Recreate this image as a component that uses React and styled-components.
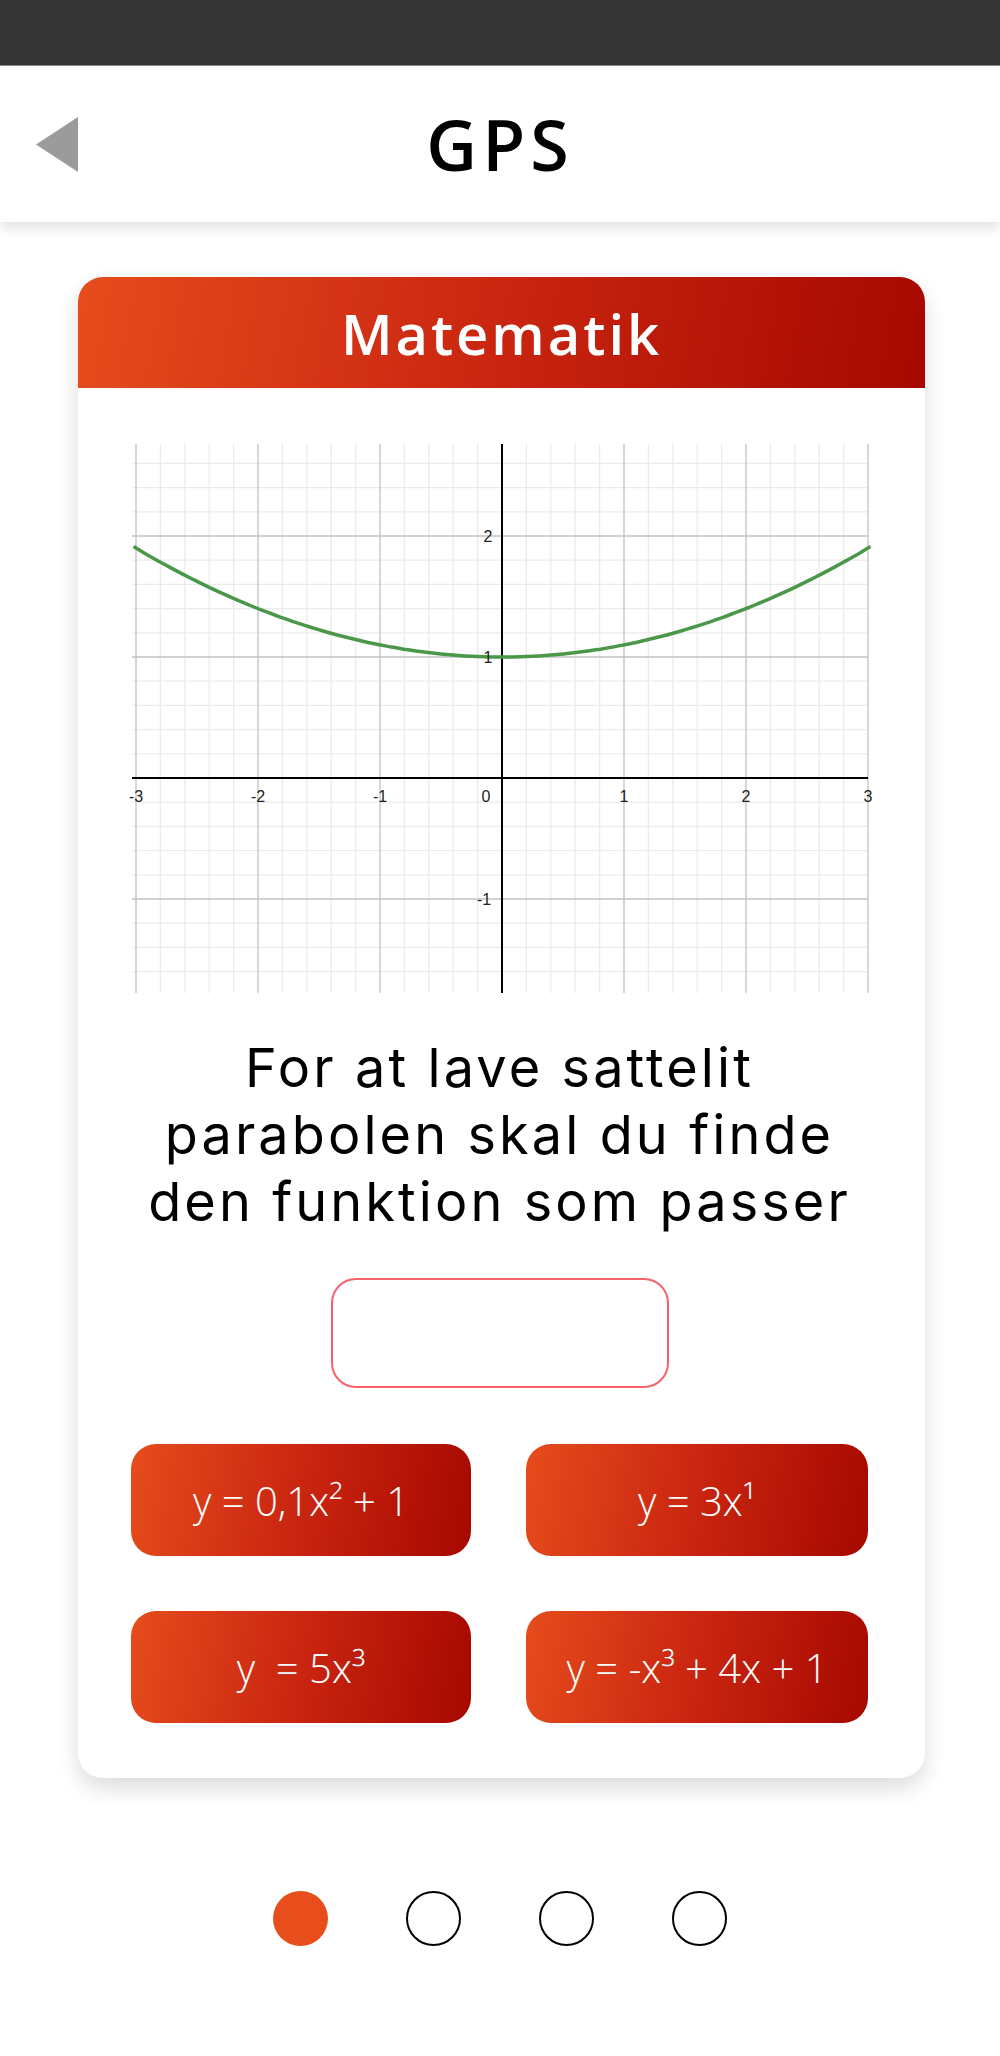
import React from 'react'
import styled, { createGlobalStyle } from 'styled-components'

const GlobalStyle = createGlobalStyle`
  body {
    margin: 0;
    background: #fff;
    font-family: 'Open Sans', 'Noto Sans', sans-serif;
  }
`

const StatusBar = styled.div`
  height: 65px;
  background: #353535;
  border-bottom: 1px solid #8a8a8a;
`

const Header = styled.header`
  height: 156px;
  display: grid;
  grid-template-columns: 1fr auto 1fr;
  align-items: center;
  background: #fff;
  box-shadow: 0 6px 12px rgba(0, 0, 0, 0.12);
  position: relative;
  z-index: 1;
`

const BackButton = styled.button`
  justify-self: start;
  margin-left: 36px;
  padding: 0;
  border: 0;
  background: none;
  display: flex;
`

const Title = styled.h1`
  margin: 0;
  font-size: 70px;
  font-weight: 600;
  letter-spacing: 5px;
  color: #000;
`

const Main = styled.main`
  padding-top: 55px;
`

const Card = styled.section`
  width: 847px;
  margin: 0 75px 0 78px;
  background: #fff;
  border-radius: 25px;
  box-shadow: 0 10px 22px rgba(0, 0, 0, 0.14);
`

const Gradient = `linear-gradient(100deg, #e64c1c 0%, #c92510 50%, #a60800 100%)`

const CardHeader = styled.div`
  height: 111px;
  border-radius: 25px 25px 0 0;
  background: ${Gradient};
  display: flex;
  align-items: center;
  justify-content: center;
`

const CardTitle = styled.h2`
  margin: 0;
  color: #fff;
  font-size: 56px;
  font-weight: 600;
  letter-spacing: 3px;
`

const CardBody = styled.div`
  padding: 56px 56px 55px 52px;
  display: flex;
  flex-direction: column;
  align-items: center;
`

const Question = styled.p`
  margin: 41px 0 0;
  font-family: Inter, 'Open Sans', sans-serif;
  font-size: 54px;
  line-height: 67px;
  text-align: center;
  color: #000;
  letter-spacing: 3.1px;
  white-space: nowrap;
`

const AnswerBox = styled.div`
  margin-top: 43px;
  width: 338px;
  height: 110px;
  box-sizing: border-box;
  border: 2px solid #f5636a;
  border-radius: 25px;
`

const Choices = styled.div`
  margin-top: 56px;
  display: grid;
  grid-template-columns: 340px 342px;
  column-gap: 55px;
  row-gap: 55px;
`

const Choice = styled.button`
  height: 112px;
  border: 0;
  border-radius: 25px;
  background: ${Gradient};
  color: #fff;
  font-family: 'Open Sans', sans-serif;
  font-weight: 300;
  font-size: 40px;
  white-space: pre;
`

const Dots = styled.div`
  margin-top: 113px;
  display: flex;
  justify-content: center;
  gap: 78px;
`

const Dot = styled.span`
  width: 55px;
  height: 55px;
  box-sizing: border-box;
  border-radius: 50%;
  border: ${p => (p.$active ? '0' : '2.5px solid #000')};
  background: ${p => (p.$active ? '#e84e1c' : 'transparent')};
`

const GraphSvg = styled.svg`
  display: block;
  overflow: visible;
`

// graph geometry
const W = 736
const H = 549
const OX = 370
const OY = 334
const UX = 122
const UY = 121

function Graph () {
  const minor = []
  const major = []
  const axes = []
  for (let k = -15; k <= 15; k++) {
    const x = OX + (k * UX) / 5
    const line = <line key={'v' + k} x1={x} x2={x} y1={0} y2={H} />
    if (k === 0) axes.push(line)
    else if (k % 5 === 0) major.push(line)
    else minor.push(line)
  }
  for (let j = -8; j <= 13; j++) {
    const y = OY - (j * UY) / 5
    const line = <line key={'h' + j} x1={0} x2={W} y1={y} y2={y} />
    if (j === 0) axes.push(line)
    else if (j % 5 === 0) major.push(line)
    else minor.push(line)
  }

  const pts = []
  for (let i = 0; i <= 120; i++) {
    const xv = -3.02 + (6.04 * i) / 120
    const yv = 0.1 * xv * xv + 1
    pts.push(`${(OX + xv * UX).toFixed(1)},${(OY - yv * UY).toFixed(1)}`)
  }

  const xLabels = [-3, -2, -1, 1, 2, 3]
  return (
    <GraphSvg width={W} height={H} viewBox={`0 0 ${W} ${H}`}>
      <g stroke="#ebebeb" strokeWidth="1.3">{minor}</g>
      <g stroke="#c2c2c2" strokeWidth="1.3">{major}</g>
      <g stroke="#000" strokeWidth="2">{axes}</g>
      <polyline points={pts.join(' ')} fill="none" stroke="#4a974a" strokeWidth="3.5" />
      <g fontFamily="'Liberation Sans', Arial, sans-serif" fontSize="16" fill="#222" textAnchor="middle">
        {xLabels.map(v => (
          <text key={v} x={OX + v * UX} y={OY + 24}>{v}</text>
        ))}
        <text x={OX - 16} y={OY + 24}>0</text>
        <text x={OX - 14} y={OY - 2 * UY + 6}>2</text>
        <text x={OX - 14} y={OY - UY + 6}>1</text>
        <text x={OX - 18} y={OY + UY + 6}>-1</text>
      </g>
    </GraphSvg>
  )
}

export default function App () {
  const choices = ['y = 0,1x² + 1', 'y = 3x¹', 'y  = 5x³', 'y = -x³ + 4x + 1']
  return (
    <>
      <GlobalStyle />
      <StatusBar />
      <Header>
        <BackButton aria-label="back">
          <svg width="42" height="55" viewBox="0 0 42 55">
            <polygon points="0,27.5 42,0 42,55" fill="#9b9b9b" />
          </svg>
        </BackButton>
        <Title>GPS</Title>
        <span />
      </Header>
      <Main>
        <Card>
          <CardHeader>
            <CardTitle>Matematik</CardTitle>
          </CardHeader>
          <CardBody>
            <Graph />
            <Question>
              For at lave sattelit<br />
              parabolen skal du finde<br />
              den funktion som passer
            </Question>
            <AnswerBox />
            <Choices>
              {choices.map(c => <Choice key={c}>{c}</Choice>)}
            </Choices>
          </CardBody>
        </Card>
        <Dots>
          <Dot $active />
          <Dot />
          <Dot />
          <Dot />
        </Dots>
      </Main>
    </>
  )
}
